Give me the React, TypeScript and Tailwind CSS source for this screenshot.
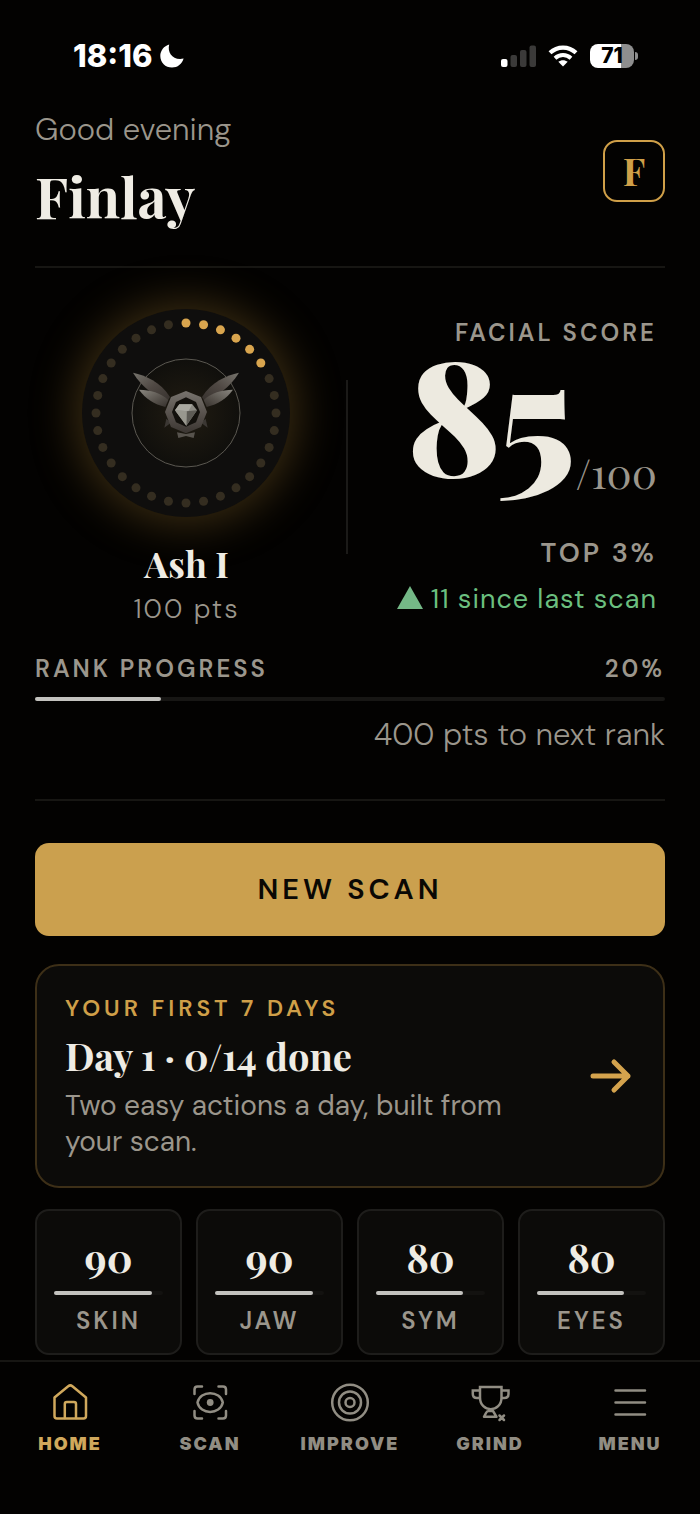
import React from 'react';

const serif = "font-['Playfair_Display','Liberation_Serif',serif]";
const eyebrow = 'text-[24px] leading-8 font-semibold tracking-[3px] uppercase';

const stats = [
  { label: 'Skin', value: 90 },
  { label: 'Jaw', value: 90 },
  { label: 'Sym', value: 80 },
  { label: 'Eyes', value: 80 },
];

const DOTS = 32;
const LIT_DOTS = 6;

function StatusBar() {
  return (
    <div className="flex items-center justify-between pt-10 pr-[62px] pl-[73px] font-[Inter,sans-serif] text-white">
      <div className="flex items-center gap-2">
        <span className="text-[31px] leading-8 font-extrabold">18:16</span>
        <svg viewBox="0 0 24 24" className="size-6" fill="currentColor" aria-hidden="true">
          <path d="M9.2 .4C7 8.400 13 17 23.600 14.600 22 20.200 17.600 23.600 12 23.600 5.400 23.600 .3 18.500 .3 12 .3 6.500 4 1.800 9.200 .4Z" />
        </svg>
      </div>
      <div className="flex items-center gap-3">
        <svg viewBox="0 0 35 24" className="h-6 w-[35px]" aria-hidden="true">
          <rect x="0" y="15" width="6.500" height="8" rx="2" fill="#fff" />
          <rect x="9.500" y="11" width="6.500" height="12" rx="2" fill="#3b3a39" />
          <rect x="19" y="6" width="6.500" height="17" rx="2" fill="#3b3a39" />
          <rect x="28.500" y="1.500" width="6.500" height="21.500" rx="2" fill="#3b3a39" />
        </svg>
        <svg viewBox="0 0 30 24" className="h-6 w-[30px]" fill="none" stroke="#fff" aria-hidden="true">
          <path d="M2 8.800C9.400 1.800 20.600 1.800 28 8.800" strokeWidth="4.200" />
          <path d="M7 14.200C11.600 10 18.400 10 23 14.200" strokeWidth="4" />
          <path d="M15 22.500 10.300 17.800C13 15.700 17 15.700 19.700 17.800Z" fill="#fff" stroke="none" />
        </svg>
        <div className="flex items-center gap-px">
          <div className="flex h-6 w-11 items-center justify-center rounded-lg bg-[linear-gradient(to_right,#fff_71%,#8e8e8e_71%)] text-[21px] leading-6 font-extrabold text-black">
            71
          </div>
          <div className="h-2 w-[3px] rounded-r-full bg-[#8e8e8e]" />
        </div>
      </div>
    </div>
  );
}

function Wing() {
  return (
    <>
      <path d="M42 68C80 76 125 96 153 141L144 156C110 138 70 115 42 68Z" fill="url(#wing)" />
      <path d="M60 119C95 120 125 128 148 150L139 171C105 162 80 147 60 119Z" fill="url(#wingLow)" />
      <path d="M142 206 136 233 156 218Z" fill="#3b3733" />
    </>
  );
}

function RankBadge() {
  return (
    <div className="size-[208px] rounded-full bg-[#0f0e0d] shadow-[0_0_44px_8px_rgba(140,108,46,0.40)]">
      <svg viewBox="0 0 208 208" className="size-full" role="img" aria-label="Ash I badge">
        <defs>
          <radialGradient id="core">
            <stop offset="0" stopColor="#211c12" />
            <stop offset="1" stopColor="#100f0c" />
          </radialGradient>
          <linearGradient id="wing" x1="0" y1="0" x2="1" y2="1">
            <stop offset="0" stopColor="#77746d" />
            <stop offset="0.500" stopColor="#4f4843" />
            <stop offset="1" stopColor="#35302c" />
          </linearGradient>
          <linearGradient id="wingLow" x1="0" y1="0" x2="1" y2="1">
            <stop offset="0" stopColor="#8a8780" />
            <stop offset="0.600" stopColor="#56514b" />
            <stop offset="1" stopColor="#35302c" />
          </linearGradient>
          <linearGradient id="frame" x1="0" y1="0" x2="0" y2="1">
            <stop offset="0" stopColor="#77736d" />
            <stop offset="0.500" stopColor="#5a544f" />
            <stop offset="1" stopColor="#3a3531" />
          </linearGradient>
        </defs>
        {Array.from({ length: DOTS }, (_, i) => {
          const angle = (i / DOTS) * Math.PI * 2;
          return (
            <circle
              key={i}
              cx={104 + Math.sin(angle) * 90}
              cy={104 - Math.cos(angle) * 90}
              r="4.500"
              fill={i < LIT_DOTS ? '#d9a54e' : '#342d20'}
            />
          );
        })}
        <circle cx="104" cy="104" r="54" fill="url(#core)" stroke="#5b5851" />
        <g transform="translate(37 41) scale(.3333)">
          <Wing />
          <g transform="translate(402 0) scale(-1 1)">
            <Wing />
          </g>
          <path d="M201 123 246 141 264 186 246 231 201 250 156 231 138 186 156 141Z" fill="url(#frame)" />
          <path d="M201 142 231 156 243 186 231 217 201 230 171 217 159 186 171 156Z" fill="#12100c" />
          <path d="M181 163H220L234 181 202 227 168 181Z" fill="#8c8b84" />
          <path d="M181 163H220L208 184 168 181Z" fill="#a9a8a0" />
          <path d="M202 227 203 184 234 181Z" fill="#5d5b55" />
          <path d="M168 181 203 184 202 227Z" fill="#99988f" />
          <path d="M174 247 201 252 228 247 224 264 201 258 178 264Z" fill="#57534d" />
        </g>
      </svg>
    </div>
  );
}

function NavItem({ label, active, children }: { label: string; active?: boolean; children: React.ReactNode }) {
  return (
    <a
      href={`#${label.toLowerCase()}`}
      aria-current={active ? 'page' : undefined}
      className={`flex flex-1 flex-col items-center gap-2.5 ${active ? 'text-[#d0a85c]' : 'text-[#918d83]'}`}
    >
      <svg
        viewBox="0 0 40 40"
        className="size-10"
        fill="none"
        stroke="currentColor"
        strokeWidth="2.500"
        strokeLinecap="round"
        strokeLinejoin="round"
        aria-hidden="true"
      >
        {children}
      </svg>
      <span className="font-[Inter,sans-serif] text-[18px] leading-6 font-black tracking-[2px] uppercase">{label}</span>
    </a>
  );
}

export default function App() {
  return (
    <div className="flex min-h-screen flex-col bg-[#030201] font-['DM_Sans',Inter,sans-serif] text-[#9b968c]">
      <StatusBar />

      <main className="px-[35px] pt-9">
        <header className="flex items-center justify-between border-b-2 border-[#171613] pb-8">
          <div>
            <p className="text-[31px] leading-[44px] font-light">Good evening</p>
            <h1 className={`mt-1.5 text-[56px] leading-[76px] font-bold text-[#efece4] ${serif}`}>Finlay</h1>
          </div>
          <button
            type="button"
            aria-label="Profile"
            className={`size-[62px] rounded-[14px] border-2 border-[#cf9f48] text-[38px] leading-none font-bold text-[#cf9f48] ${serif}`}
          >
            F
          </button>
        </header>

        <section className="grid grid-cols-[1fr_2px_1.02fr] gap-2 pt-[41px]">
          <div className="flex flex-col items-center">
            <RankBadge />
            <h2 className={`mt-6 text-[36px] leading-[44px] font-bold text-[#efece4] ${serif}`}>Ash I</h2>
            <p className="mt-1 text-[27px] leading-10 font-light tracking-[2px]">100 pts</p>
          </div>
          <div className="mt-[71px] h-[174px] bg-[#1b1a18]" />
          <div className="flex flex-col items-end pt-2 pr-2">
            <h2 className={eyebrow}>Facial score</h2>
            <p className={`flex items-start ${serif}`}>
              <span className="text-[160px] leading-[124px] font-black tracking-[-4px] text-[#edeae0]">85</span>
              <span className="pt-[102px] pl-1 text-[42px] leading-none">/100</span>
            </p>
            <p className="mt-11 text-[27px] leading-8 font-semibold tracking-[3px]">TOP 3%</p>
            <p className="mt-2.5 flex items-center gap-2 text-[27px] leading-10 tracking-[1px] text-[#6bbf7f]">
              <svg viewBox="0 0 26 23" className="mb-1 h-[23px] w-[26px]" fill="#74b886" aria-hidden="true">
                <path d="M13 0 26 23H0Z" />
              </svg>
              11 since last scan
            </p>
          </div>
        </section>

        <section className="border-b-2 border-[#171613] pt-6 pb-11">
          <div className={`flex justify-between ${eyebrow}`}>
            <h2>Rank progress</h2>
            <span>20%</span>
          </div>
          <div className="mt-3 h-1 rounded-full bg-[#171614]">
            <div className="h-1 w-1/5 rounded-full bg-[#c3c2be]" />
          </div>
          <p className="mt-3.5 text-right text-[31px] leading-10 font-light">400 pts to next rank</p>
        </section>

        <button
          type="button"
          className="mt-[42px] block h-[93px] w-full rounded-[14px] bg-[#cba04e] text-[29px] font-semibold tracking-[4px] text-[#0a0804]"
        >
          NEW SCAN
        </button>

        <a
          href="#plan"
          className="mt-7 flex items-center justify-between rounded-3xl border-2 border-[#3d2f17] bg-[#0c0b09] px-7 py-[26px]"
        >
          <div>
            <h2 className="text-[23px] leading-8 font-semibold tracking-[4px] text-[#cf9f48] uppercase">Your first 7 days</h2>
            <p className={`mt-1.5 text-[38px] leading-[52px] font-bold text-[#efece4] ${serif}`}>Day 1 · 0/14 done</p>
            <p className="mt-1.5 max-w-[460px] text-[28px] leading-9">Two easy actions a day, built from your scan.</p>
          </div>
          <svg
            viewBox="0 0 48 36"
            className="h-9 w-12 shrink-0"
            fill="none"
            stroke="#d4a34d"
            strokeWidth="5"
            strokeLinecap="round"
            strokeLinejoin="round"
            aria-hidden="true"
          >
            <path d="M6 18H41M27 4 41 18 27 32" />
          </svg>
        </a>

        <section className="mt-[21px] grid grid-cols-4 gap-3.5">
          {stats.map((stat) => (
            <div key={stat.label} className="rounded-[14px] border-2 border-[#1e1d1b] bg-[#0c0b09] px-[17px] pt-[22px] pb-4 text-center">
              <p className={`text-[40px] leading-[48px] font-bold text-[#efece4] ${serif}`}>{stat.value}</p>
              <div className="mt-2.5 h-1 rounded-full bg-[#131210]">
                <div className="h-1 rounded-full bg-[#c3c2be]" style={{ width: `${stat.value}%` }} />
              </div>
              <h3 className={`mt-2.5 ${eyebrow}`}>{stat.label}</h3>
            </div>
          ))}
        </section>
      </main>

      <nav className="sticky bottom-0 mt-auto flex border-t-2 border-[#171613] bg-[#030201] pt-5 pb-[58px]">
        <NavItem label="Home" active>
          <path d="M4.500 15.500 18.200 4.200Q20.300 2.600 22.400 4.200L36 15.500V34Q36 36.500 33.500 36.500H7Q4.500 36.500 4.500 34Z" />
          <path d="M14.800 36V22Q14.800 20 16.800 20H24Q26 20 26 22V36" />
        </NavItem>
        <NavItem label="Scan">
          <path d="M4.500 12V7.500Q4.500 4.500 7.500 4.500H12M28.500 4.500H33Q36 4.500 36 7.500V12M36 29V33.500Q36 36.500 33 36.500H28.500M12 36.500H7.500Q4.500 36.500 4.500 33.500V29" />
          <path d="M7.500 20.500C10 8 30.300 8 32.800 20.500 30.300 33 10 33 7.500 20.500Z" />
          <circle cx="20.200" cy="20.500" r="3.400" fill="currentColor" stroke="none" />
        </NavItem>
        <NavItem label="Improve">
          <circle cx="20" cy="20.500" r="17.800" />
          <circle cx="20" cy="20.500" r="11" />
          <circle cx="20" cy="20.500" r="4.500" />
        </NavItem>
        <NavItem label="Grind">
          <path d="M10 5H31.500V15.500C31.500 31 10 31 10 15.500ZM10 8.500H2.800V12Q2.800 16 7 16H10M31.500 8.500H38.500V12Q38.500 16 34.300 16H31.500" strokeLinejoin="miter" />
          <path d="M18.500 29H23L26.500 34.800H14L16 31Q17 29 18.500 29M29.500 33.500 34 38M34 33.500 29.500 38" />
        </NavItem>
        <NavItem label="Menu">
          <path d="M5.500 8.500H35M5.500 20.500H35M5.500 32.500H35" />
        </NavItem>
      </nav>
    </div>
  );
}
